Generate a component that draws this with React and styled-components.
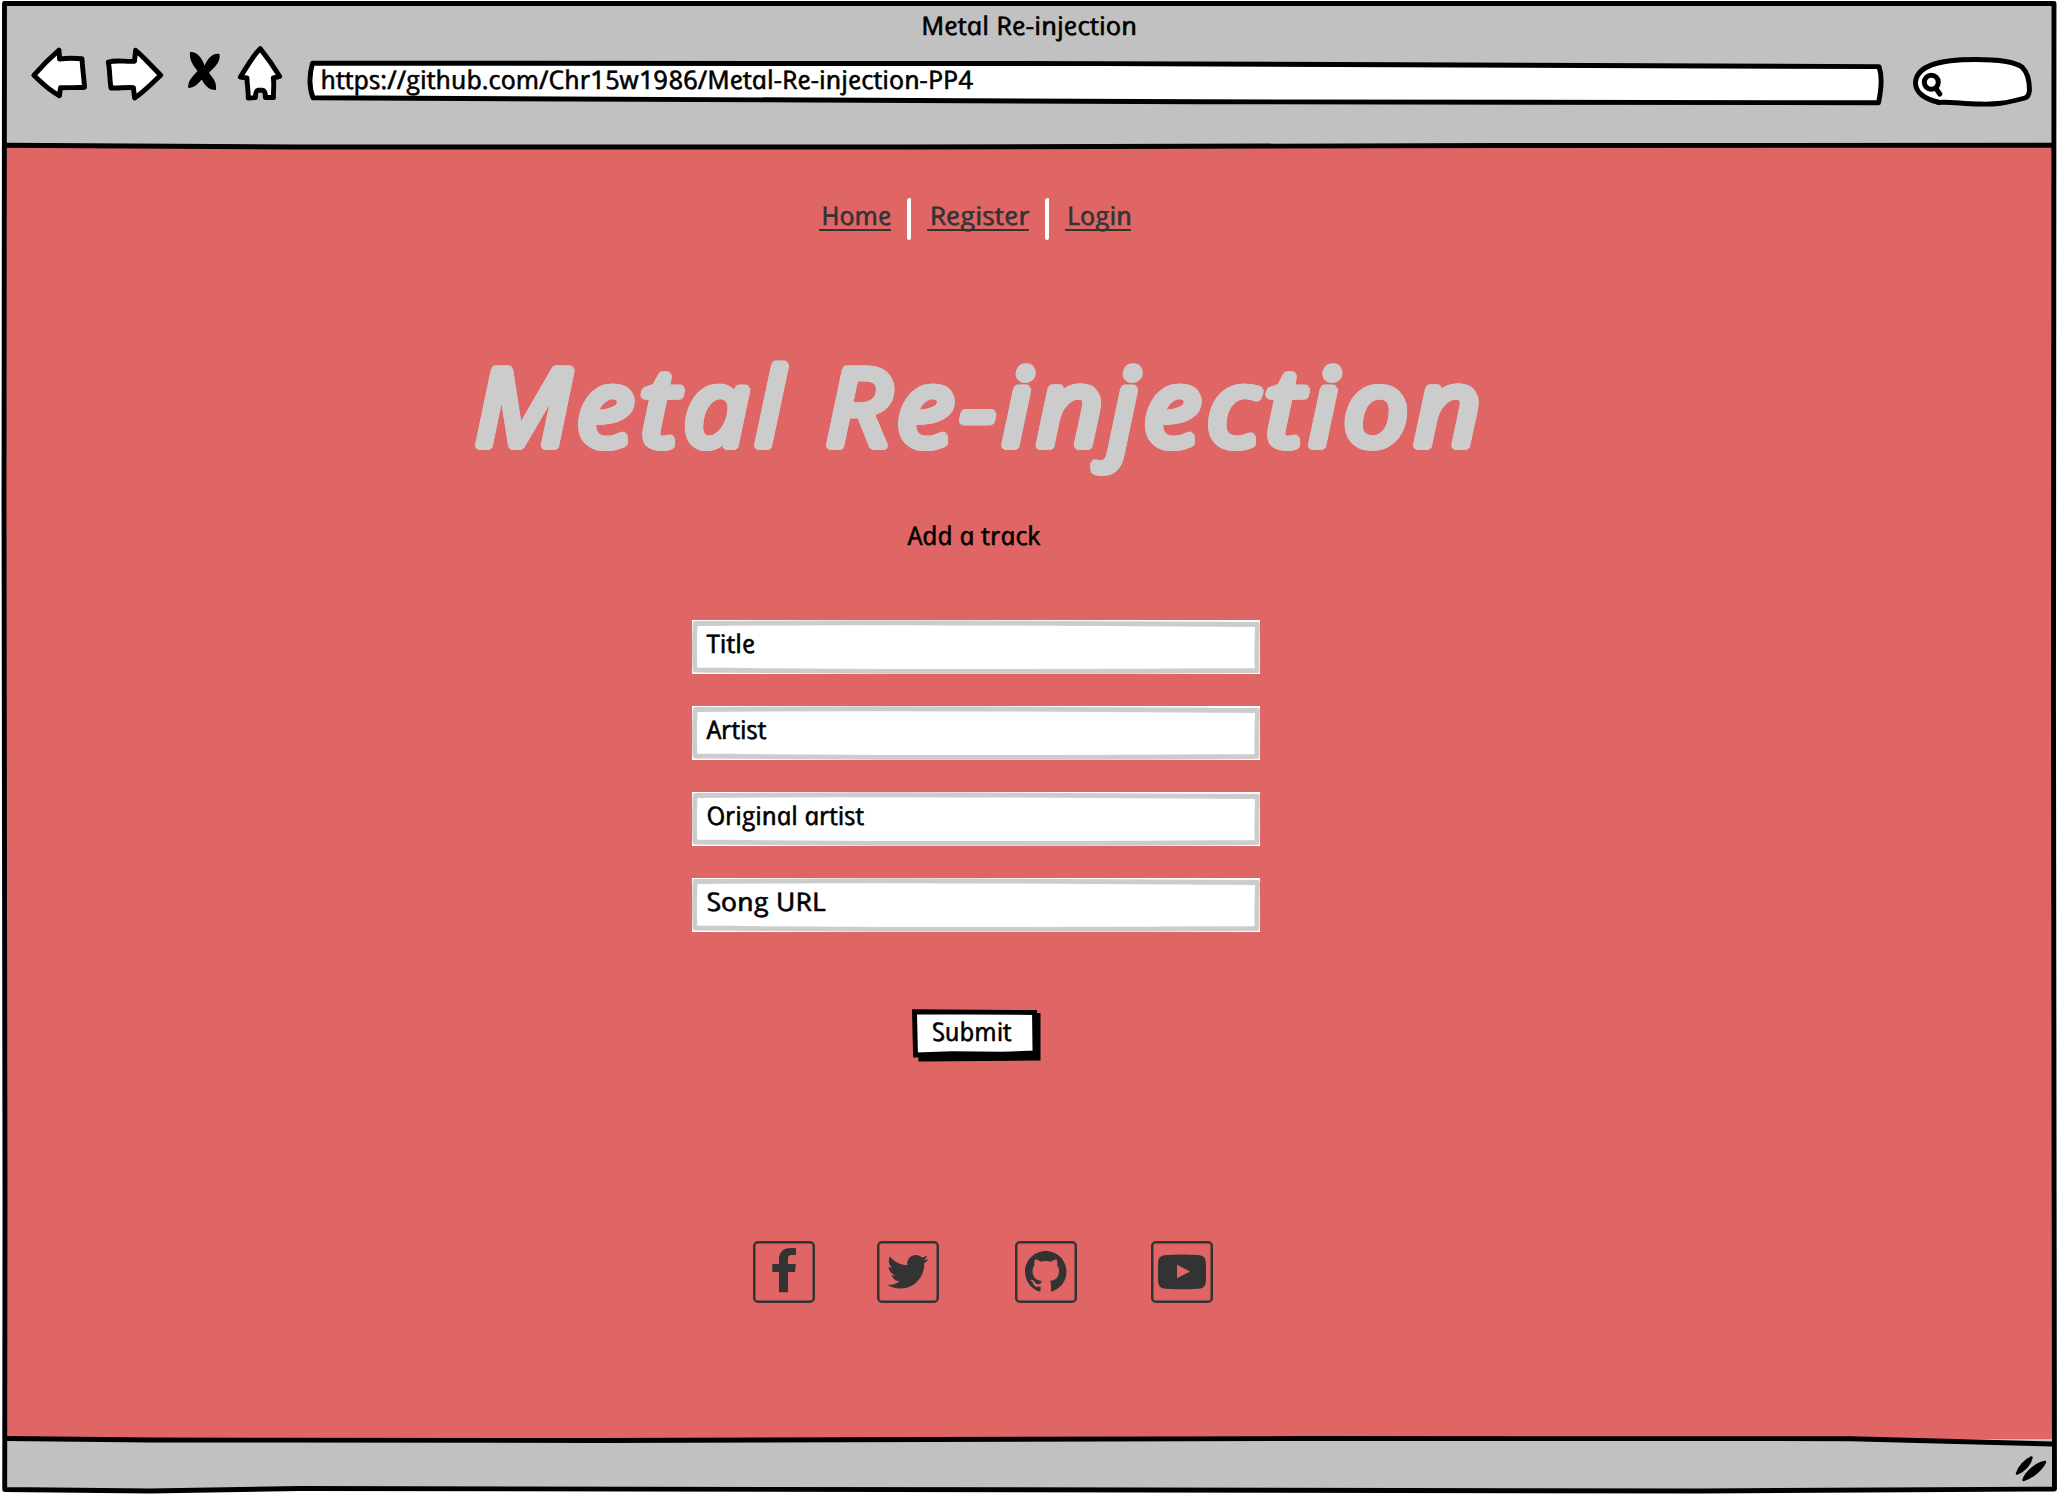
import React from "react";
import styled, { createGlobalStyle, css } from "styled-components";
import { FaTwitter } from "react-icons/fa";

const GlobalStyle = createGlobalStyle`
  *, *::before, *::after { box-sizing: border-box; }
  body { margin: 0; background: #fff; }
`;

const sketchFont = css`
  font-family: "Open Sans", "Noto Sans", sans-serif;
  font-style: italic;
  font-weight: 400;
`;

/* The italic has the single-storey letters; the skew stands them upright. */
const Label = styled.span`
  ${sketchFont}
  display: inline-block;
  font-size: 25.6px;
  line-height: 32px;
  white-space: pre;
  transform-origin: ${(p) => p.$origin || "center"};
  transform: scaleX(${(p) => p.$stretch || 1}) skewX(12deg);
  -webkit-text-stroke: 0.55px currentColor;
`;

const Window = styled.div`
  position: relative;
  display: flex;
  flex-direction: column;
  width: 2058px;
  height: 1494px;
  padding: 3px 4px 4px;
  overflow: hidden;
`;

const Ink = styled.svg`
  display: block;
  flex: none;
  overflow: visible;
  fill: none;
  stroke: #000;
  stroke-width: 4.9;
  stroke-linejoin: round;
  stroke-linecap: round;
`;

const FrameInk = styled(Ink)`
  position: absolute;
  inset: 0;
  pointer-events: none;
`;

const Header = styled.header`
  flex: none;
  display: flex;
  flex-direction: column;
  height: 143px;
  padding-top: 7px;
  background: #c1c1c1;
  color: #000;
`;

const WindowTitle = styled.div`
  display: flex;
  justify-content: center;
  height: 34px;
`;

const Toolbar = styled.div`
  display: flex;
  align-items: flex-start;
  height: 68px;
  padding-left: 24px;
`;

const ToolGroup = styled.div`
  display: flex;
  width: 278px;
`;

const Address = styled.div`
  position: relative;
  width: 1578px;
  height: 68px;
  padding: 20px 0 0 14px;
`;

const Backing = styled(Ink)`
  position: absolute;
  inset: 0;
`;

const Content = styled.span`
  position: relative;
  display: inline-flex;
`;

const SearchBox = styled.div`
  margin-left: 24px;
`;

const Main = styled.main`
  flex: none;
  display: flex;
  flex-direction: column;
  align-items: center;
  height: 1293px;
  padding: 52px 106px 0 0;
  background: #e06666;
`;

const Nav = styled.nav`
  display: flex;
  align-items: flex-start;
  height: 42px;
  margin-right: 2px;
`;

const NavLink = styled.a`
  display: flex;
  justify-content: center;
  width: ${(p) => p.$width}px;
  height: 33px;
  padding-top: 2px;
  border-bottom: 2px solid #333;
  border-radius: 1px;
  color: #333;
  text-decoration: none;
`;

const Divider = styled.span`
  width: 4px;
  height: 42px;
  margin: 0 16px;
  border-radius: 3px 1px 2px 2px;
  background: #fff;
`;

const SiteTitle = styled.h1`
  ${sketchFont}
  margin: 105px 0 0;
  padding-left: 7px;
  font-size: 107px;
  line-height: 120px;
  letter-spacing: 5px;
  white-space: pre;
  color: #ccc;
  transform: scaleX(1.085) skewX(1deg);
  text-shadow: 4px 0 #ccc, 3.7px 1.5px #ccc, 2.8px 2.8px #ccc, 1.5px 3.7px #ccc,
    0 4px #ccc, -1.5px 3.7px #ccc, -2.8px 2.8px #ccc, -3.7px 1.5px #ccc,
    -4px 0 #ccc, -3.7px -1.5px #ccc, -2.8px -2.8px #ccc, -1.5px -3.7px #ccc,
    0 -4px #ccc, 1.5px -3.7px #ccc, 2.8px -2.8px #ccc, 3.7px -1.5px #ccc;
`;

const FormHeading = styled.div`
  height: 32px;
  margin-top: 55px;
  padding-right: 5px;
  color: #000;
`;

const Form = styled.div`
  display: flex;
  flex-direction: column;
  align-items: center;
  gap: 32px;
  margin-top: 68px;
`;

const Field = styled.div`
  position: relative;
  width: 568px;
  height: 54px;
  padding: 8px 14px;
  background: #fff;
  color: #000;
`;

const FieldInk = styled(Backing)`
  stroke: #ccc;
  stroke-width: 4.8;
`;

const SubmitButton = styled.div`
  position: relative;
  display: flex;
  justify-content: center;
  width: 129px;
  height: 53px;
  margin-top: 77px;
  padding: 7px 6px 0 0;
  color: #000;
`;

const Socials = styled.div`
  display: flex;
  width: 460px;
  margin: 179px 0 0 14px;
`;

const SocialLink = styled.a`
  flex: none;
  display: flex;
  align-items: center;
  justify-content: center;
  width: 62px;
  height: 62px;
  margin-right: ${(p) => p.$after || 0}px;
  border: 2px solid #333;
  border-radius: 5px;
  box-shadow: inset 0 0 0 0.5px #333;
  color: #333;
`;

const Glyph = styled.svg`
  display: block;
  flex: none;
  width: ${(p) => p.$size}px;
  height: ${(p) => p.$size}px;
  fill: currentColor;
`;

const Footer = styled.footer`
  flex: none;
  height: 51px;
  background: #c1c1c1;
`;

const FIELDS = [
  { name: "Title", stretch: 1.04 },
  { name: "Artist", stretch: 1.02 },
  { name: "Original artist", stretch: 1.01 },
  { name: "Song URL", stretch: 1.12 },
];

function NavigationTools() {
  return (
    <ToolGroup>
      <Ink width="66" height="68" viewBox="28 44 66 68">
        <path fill="#fff" d="M33.8 75.3C42 66 50 58 59 50.2L59.6 59C67 58 75 58 82 58.8C82.5 69 84 78 84.5 87.3C76 88 68 87.4 60.5 87.8L59.5 95.7C48 90 41 82 33.8 75.3Z" />
      </Ink>
      <Ink width="82" height="68" viewBox="94 44 82 68">
        <path fill="#fff" d="M108.3 62C117 59.5 126 62 134.5 61.2L135.6 50.3C145 58 152 67 160.8 75.2C152 83 145 91 134.6 98L133.4 87.6C126 87 119 88.4 111 88C109.5 79 110 70 108.3 62Z" />
      </Ink>
      <Ink width="54" height="68" viewBox="176 44 54 68">
        <path fill="#000" stroke="none" d="M190 52C197 51.5 202 58 204.5 65.5C209 57 213 53 219.5 54C221 63 213 68 209 73C213 78 217 82 216 90C208 90 205 85 201.5 79.5C198 84 194 88 188.3 88C187.5 81 193 76 197.5 71C193 65 189 60 190 52Z" />
      </Ink>
      <Ink width="76" height="68" viewBox="230 44 76 68">
        <path fill="#fff" d="M260.2 48.6C267 57 274 67 279.7 76.4L273.3 78C274.5 85 273 91 273.5 97.5L265.3 97.5C265.5 93 264.5 90.5 262.5 90.3L257.8 90.3C255.5 91 255.6 94 255.4 97.6L248.2 98C248.5 91 247 85 247 78L240.3 77C247 67 252 57 260.2 48.6Z" />
      </Ink>
    </ToolGroup>
  );
}

function SocialIcons() {
  return (
    <Socials>
      <SocialLink $after={62} aria-label="Facebook">
        <Glyph $size={62} viewBox="0 0 62 62">
          <path d="M43 7H38C30 7 26 11.5 26 18V23H19.3V31H26V51.3H35V31H42L42.8 23H35V18C35 15 36 14 38.5 14H43Z" />
        </Glyph>
      </SocialLink>
      <SocialLink $after={76} aria-label="Twitter">
        <FaTwitter size={41.5} />
      </SocialLink>
      <SocialLink $after={74} aria-label="GitHub">
        <Glyph $size={41.5} viewBox="0 0 16 16">
          <path d="M8 0C3.58 0 0 3.58 0 8c0 3.54 2.29 6.53 5.47 7.59.4.07.55-.17.55-.38 0-.19-.01-.82-.01-1.49-2.01.37-2.53-.49-2.69-.94-.09-.23-.48-.94-.82-1.13-.28-.15-.68-.52-.01-.53.63-.01 1.08.58 1.23.82.72 1.21 1.87.87 2.33.66.07-.52.28-.87.51-1.07-1.78-.2-3.64-.89-3.64-3.95 0-.87.31-1.59.82-2.15-.08-.2-.36-1.02.08-2.12 0 0 .67-.21 2.2.82.64-.18 1.32-.27 2-.27.68 0 1.36.09 2 .27 1.53-1.04 2.2-.82 2.2-.82.44 1.1.16 1.92.08 2.12.51.56.82 1.27.82 2.15 0 3.07-1.87 3.75-3.65 3.95.29.25.54.73.54 1.48 0 1.07-.01 1.93-.01 2.2 0 .21.15.46.55.38A8.013 8.013 0 0016 8c0-4.42-3.58-8-8-8z" />
        </Glyph>
      </SocialLink>
      <SocialLink aria-label="YouTube">
        <Glyph $size={62} viewBox="0 0 62 62">
          <path fillRule="evenodd" d="M15 14Q31 13.2 47 14C52.5 14.3 55 17 55 23V39C55 45 52.5 47.5 47 47.8Q31 48.8 15 47.8C9.5 47.5 7 45 7 39V23C7 17 9.5 14.3 15 14ZM26 23.7V37.3L39 30.5Z" />
        </Glyph>
      </SocialLink>
    </Socials>
  );
}

export default function App() {
  return (
    <Window>
      <GlobalStyle />
      <Header>
        <WindowTitle>
          <Label $stretch={1.07}>Metal Re-injection</Label>
        </WindowTitle>
        <Toolbar>
          <NavigationTools />
          <Address>
            <Backing width="1578" height="68" viewBox="306 44 1578 68">
              <path fill="#fff" d="M312.5 63.2L1100 63.6L1879 66.6C1883 78 1881 91 1878.5 102.8L1200 101.8L313 97.8C308.5 86 309.5 74 312.5 63.2Z" />
            </Backing>
            <Content>
              <Label $stretch={1.046} $origin="left">https://github.com/Chr15w1986/Metal-Re-injection-PP4</Label>
            </Content>
          </Address>
          <SearchBox>
            <Ink width="128" height="68" viewBox="1908 44 128 68">
              <path fill="#fff" d="M1938 102C1924 99 1915.5 92 1915.5 83C1916 67 1935 59.5 1976 59.5C1996 59.5 2014 61.5 2022 67C2028 73 2029.5 82 2029.5 90Q2029 96.5 2025 98C2005 103.5 1995 104.5 1980 104C1960 103.5 1950 101.5 1938 102.5" />
              <circle cx="1931.3" cy="82.2" r="7" strokeWidth="5" />
              <path d="M1936 88.5L1939.8 94" strokeWidth="5" />
            </Ink>
          </SearchBox>
        </Toolbar>
      </Header>

      <Main>
        <Nav>
          <NavLink $width={72.5}><Label $stretch={1.05}>Home</Label></NavLink>
          <Divider />
          <NavLink $width={102}><Label $stretch={1.12}>Register</Label></NavLink>
          <Divider />
          <NavLink $width={66}><Label $stretch={1.06}>Login</Label></NavLink>
        </Nav>
        <SiteTitle>Metal Re-injection</SiteTitle>
        <FormHeading><Label $stretch={1.03}>Add a track</Label></FormHeading>
        <Form>
          {FIELDS.map(({ name, stretch }) => (
            <Field key={name}>
              <FieldInk width="568" height="54" viewBox="0 0 568 54">
                <path d="M3.2 3.5Q150 2.3 284 3L565.5 4.500Q564.5 28 565 50.500Q284 52.500 3 50Q2 26 3.200 3.500Z" />
              </FieldInk>
              <Content><Label $stretch={stretch} $origin="left">{name}</Label></Content>
            </Field>
          ))}
        </Form>
        <SubmitButton>
          <Backing width="129" height="53" viewBox="0 0 129 53">
            <path fill="#000" stroke="none" d="M6 6L128.5 4V51.5L6.5 52.5Z" />
            <path fill="#fff" strokeLinejoin="miter" d="M2.500 2.800L122.500 3.500L123 44L90 45.200L40 44.800L3.500 46Z" />
          </Backing>
          <Content><Label>Submit</Label></Content>
        </SubmitButton>
        <SocialIcons />
      </Main>

      <Footer />

      <FrameInk width="2058" height="1494" viewBox="0 0 2058 1494">
        <path d="M4.500 3.500H2054L2053.500 700L2054.500 1489L1700 1491L300 1488.500L150 1491L4.700 1489.500L5 1200L4 500L4.500 3.500Z" />
        <path d="M5 145.300L300 147L900 147L1500 145.500L2053 145.300" />
        <path d="M6 1438.500L150 1440L600 1440.500L1300 1438.500L1850 1438.700L2052 1444" />
        <path d="M2017 1473.500C2019 1467 2025 1460.500 2031.500 1457.500C2030.500 1463.500 2024 1471 2017 1473.500Z" fill="#000" strokeWidth="2.500" />
        <path d="M2023.500 1480C2026 1472 2037 1463 2045 1462C2042 1469 2032 1477.500 2023.500 1480Z" fill="#000" strokeWidth="2.500" />
      </FrameInk>
    </Window>
  );
}
